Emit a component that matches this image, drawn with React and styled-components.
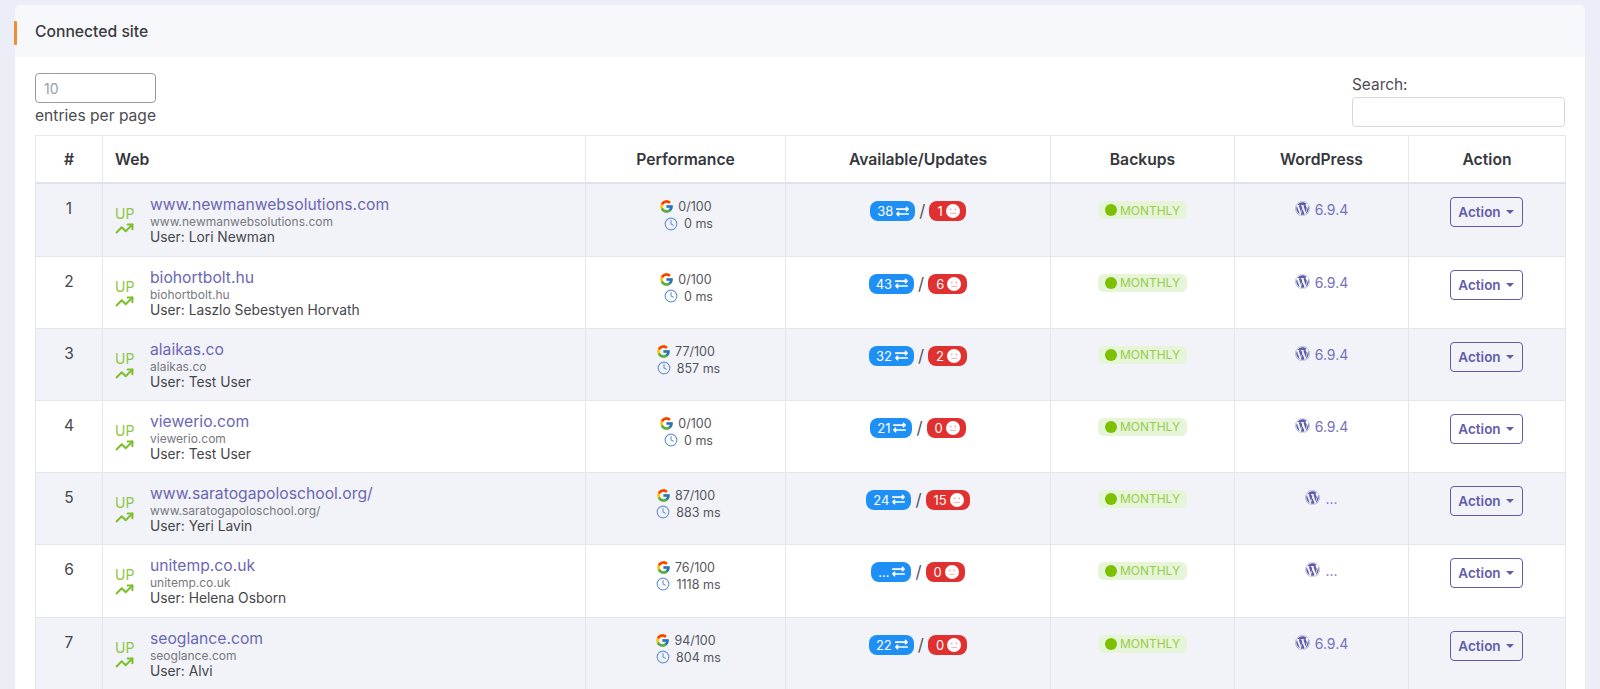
import styled, { createGlobalStyle } from "styled-components";
import { FcGoogle } from "react-icons/fc";
import { FaExchangeAlt, FaWordpress } from "react-icons/fa";
import { FiClock } from "react-icons/fi";
import { TrendingUp } from "lucide-react";

const Global = createGlobalStyle`
  html, body {
    margin: 0;
    height: 100%;
    overflow: hidden;
    background: #ebeef6;
    font-family: Inter, "Liberation Sans", sans-serif;
    color: #3f4046;
  }
`;

const Page = styled.div`
  padding: 5px 15px 0;
`;

const Card = styled.section`
  background: #fff;
  border-radius: 5px 5px 0 0;
`;

const CardHead = styled.header`
  position: relative;
  height: 52px;
  display: flex;
  align-items: center;
  padding-left: 20px;
  background: #f7f8fc;
  border-radius: 5px 5px 0 0;
  font-size: 15.7px;
  font-weight: 500;
  color: #3a3b40;

  &::before {
    content: "";
    position: absolute;
    left: -1px;
    top: 16px;
    width: 3px;
    height: 24px;
    background: #ed8f2e;
    border-radius: 1px;
  }
`;

const CardBody = styled.div`
  padding: 16px 20px 0;
`;

const Controls = styled.div`
  display: flex;
  justify-content: space-between;
  height: 62px;
`;

const PageSize = styled.div`
  width: 121px;
  font-size: 15.6px;
  color: #4c4d52;
  white-space: nowrap;
`;

const SizeInput = styled.div`
  box-sizing: border-box;
  height: 30px;
  margin-bottom: 3px;
  padding: 0 8px;
  display: flex;
  align-items: center;
  border: 1px solid #9a9ba0;
  border-radius: 4px;
  font-size: 14px;
  color: #9b9ca2;
`;

const SearchBox = styled.div`
  width: 213px;
  margin-top: 3px;
  font-size: 15.4px;
  line-height: 18px;
  color: #4c4d52;
`;

const SearchInput = styled.div`
  box-sizing: border-box;
  height: 30px;
  margin-top: 3px;
  border: 1px solid #d6d8df;
  border-radius: 4px;
`;

const Table = styled.table`
  width: 1530px;
  table-layout: fixed;
  border-collapse: collapse;
`;

const Th = styled.th`
  height: 46px;
  padding: 0;
  padding-left: ${(p) => (p.$left ? "12px" : "0")};
  text-align: ${(p) => (p.$left ? "left" : "center")};
  font-size: 15.7px;
  font-weight: 600;
  color: #36373c;
  border: 1px solid #e6e8ef;
  border-bottom: 2px solid #dfe2ea;
`;

const Row = styled.tr`
  height: ${(p) => (p.$tall ? 73 : 72)}px;
  background: ${(p) => (p.$odd ? "#f1f3f9" : "#fff")};
`;

const Td = styled.td`
  padding: ${(p) => p.$top || "17px"} ${(p) => p.$right || "0"} 0 0;
  vertical-align: top;
  text-align: center;
  font-size: 14px;
  border: 1px solid #e3e6ee;
`;

const Num = styled.div`
  font-size: 15.5px;
  line-height: 18px;
  margin-top: -1px;
  color: #45464b;
`;

const WebCell = styled.div`
  display: flex;
  padding-left: 12px;
  text-align: left;
`;

const Status = styled.div`
  width: 35px;
  padding-top: 10px;
  font-size: 14px;
  line-height: 15px;
  color: #8fc640;

  svg {
    display: block;
    margin-top: -2px;
    color: #7fbf2f;
  }
`;

const SiteLink = styled.a`
  display: block;
  font-size: 15.7px;
  line-height: 18px;
  color: #6a67b3;
`;

const SiteHost = styled.div`
  font-size: 12px;
  line-height: 15px;
  color: #77787e;
`;

const SiteUser = styled.div`
  font-size: 13.8px;
  line-height: 16px;
  color: #45464b;
`;

const PerfLine = styled.div`
  display: flex;
  justify-content: center;
  align-items: center;
  gap: ${(p) => p.$gap || 4}px;
  height: 17px;
  font-size: 12.5px;
  color: #55565c;
  transform: translateX(${(p) => p.$shift || 0}px);
`;

const Updates = styled.div`
  display: flex;
  justify-content: center;
  align-items: center;
  gap: 4px;
  font-size: 17px;
  color: #55565c;
`;

const Pill = styled.span`
  height: 20px;
  padding: 0 6px 0 ${(p) => p.$pad || 7}px;
  display: inline-flex;
  align-items: center;
  gap: 3px;
  border-radius: 8px;
  background: ${(p) => p.$bg};
  color: #fff;
  font-size: 13px;
`;

const Backup = styled.span`
  display: inline-flex;
  align-items: center;
  gap: 3px;
  height: 18px;
  padding: 0 7px;
  border-radius: 6px;
  background: #e6f5d8;
  color: #98cc4a;
  font-size: 12px;
`;

const Dot = styled.i`
  width: 12px;
  height: 12px;
  border-radius: 50%;
  background: #7cc000;
`;

const Wp = styled.div`
  display: flex;
  justify-content: center;
  align-items: center;
  gap: 5px;
  font-size: 14px;
  line-height: 18px;
  color: #7572bb;

  svg {
    margin-top: -3px;
  }
`;

const ActionBtn = styled.button`
  box-sizing: border-box;
  width: 73px;
  height: 30px;
  padding: 0;
  display: inline-flex;
  justify-content: center;
  align-items: center;
  gap: 5px;
  background: transparent;
  border: 1px solid #5f5dab;
  border-radius: 4px;
  color: #5f5dab;
  font-family: inherit;
  font-size: 13.5px;
  font-weight: 600;

  &::after {
    content: "";
    border-top: 4px solid #5f5dab;
    border-left: 4px solid transparent;
    border-right: 4px solid transparent;
  }
`;

const MehFace = () => (
  <svg width="14" height="14" viewBox="0 0 13 13">
    <circle cx="6.5" cy="6.5" r="6.5" fill="#fff" />
    <circle cx="4.4" cy="5" r="0.8" fill="#f2a9a9" />
    <circle cx="8.6" cy="5" r="0.8" fill="#f2a9a9" />
    <rect x="3.8" y="8.2" width="5.4" height="0.9" fill="#f2a9a9" />
  </svg>
);

const sites = [
  { url: "www.newmanwebsolutions.com", user: "Lori Newman", score: 0, ms: 0, avail: 38, upd: 1, wp: "6.9.4" },
  { url: "biohortbolt.hu", user: "Laszlo Sebestyen Horvath", score: 0, ms: 0, avail: 43, upd: 6, wp: "6.9.4" },
  { url: "alaikas.co", user: "Test User", score: 77, ms: 857, avail: 32, upd: 2, wp: "6.9.4" },
  { url: "viewerio.com", user: "Test User", score: 0, ms: 0, avail: 21, upd: 0, wp: "6.9.4" },
  { url: "www.saratogapoloschool.org/", user: "Yeri Lavin", score: 87, ms: 883, avail: 24, upd: 15, wp: "..." },
  { url: "unitemp.co.uk", user: "Helena Osborn", score: 76, ms: 1118, avail: "...", upd: 0, wp: "..." },
  { url: "seoglance.com", user: "Alvi", score: 94, ms: 804, avail: 22, upd: 0, wp: "6.9.4" },
];

export default function App() {
  return (
    <Page>
      <Global />
      <Card>
        <CardHead>Connected site</CardHead>
        <CardBody>
          <Controls>
            <PageSize>
              <SizeInput>10</SizeInput>
              entries per page
            </PageSize>
            <SearchBox>
              Search:
              <SearchInput />
            </SearchBox>
          </Controls>
          <Table>
            <colgroup>
              <col style={{ width: 67 }} />
              <col style={{ width: 483 }} />
              <col style={{ width: 200 }} />
              <col style={{ width: 265 }} />
              <col style={{ width: 184 }} />
              <col style={{ width: 174 }} />
              <col style={{ width: 157 }} />
            </colgroup>
            <thead>
              <tr>
                <Th>#</Th>
                <Th $left>Web</Th>
                <Th>Performance</Th>
                <Th>Available/Updates</Th>
                <Th>Backups</Th>
                <Th>WordPress</Th>
                <Th>Action</Th>
              </tr>
            </thead>
            <tbody>
              {sites.map((s, i) => (
                <Row key={s.url} $odd={i % 2 === 0} $tall={i === 0 || i === 5}>
                  <Td>
                    <Num>{i + 1}</Num>
                  </Td>
                  <Td $top="12px">
                    <WebCell>
                      <Status>
                        UP
                        <TrendingUp size={19} strokeWidth={2.6} />
                      </Status>
                      <div>
                        <SiteLink>{s.url}</SiteLink>
                        <SiteHost>{s.url}</SiteHost>
                        <SiteUser>User: {s.user}</SiteUser>
                      </div>
                    </WebCell>
                  </Td>
                  <Td $top="14px">
                    <PerfLine>
                      <FcGoogle size={15} />
                      {s.score}/100
                    </PerfLine>
                    <PerfLine $shift={3} $gap={6}>
                      <FiClock size={14} color="#6f96d2" />
                      {s.ms} ms
                    </PerfLine>
                  </Td>
                  <Td $top="17px">
                    <Updates>
                      <Pill $bg="#1e8ff5">
                        {s.avail}
                        <FaExchangeAlt size={13} />
                      </Pill>
                      /
                      <Pill $bg="#e0302f" $pad={8}>
                        {s.upd}
                        <MehFace />
                      </Pill>
                    </Updates>
                  </Td>
                  <Td $top="17px">
                    <Backup>
                      <Dot />
                      MONTHLY
                    </Backup>
                  </Td>
                  <Td $top="17px">
                    <Wp>
                      <FaWordpress size={15} color="#5f5dab" />
                      {s.wp}
                    </Wp>
                  </Td>
                  <Td $top="13px" $right="2px">
                    <ActionBtn>Action</ActionBtn>
                  </Td>
                </Row>
              ))}
            </tbody>
          </Table>
        </CardBody>
      </Card>
    </Page>
  );
}
